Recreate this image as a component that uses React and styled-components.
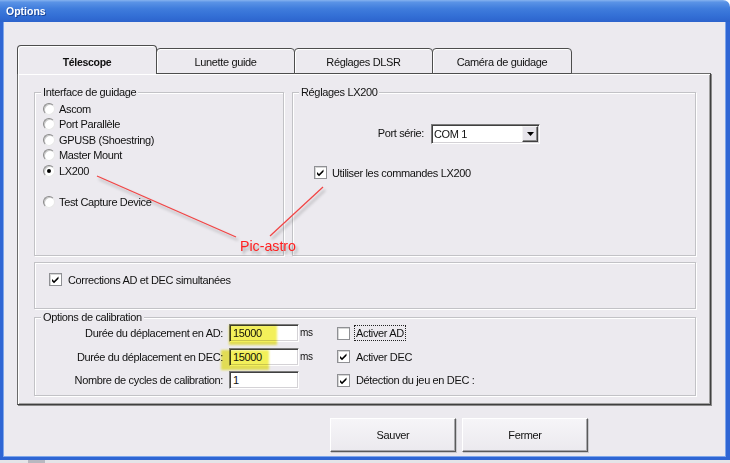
import React from 'react';
import styled, { createGlobalStyle } from 'styled-components';

const BG = '#ECEAEF';

const GlobalStyle = createGlobalStyle`
  html, body { margin: 0; padding: 0; background: #fff; }
  body {
    font-family: "Liberation Sans", Arial, sans-serif;
    font-size: 11px;
    letter-spacing: -0.35px;
    color: #111;
  }
`;

const Window = styled.div`
  position: relative;
  width: 730px;
  height: 463px;
  display: flex;
  flex-direction: column;
  overflow: hidden;
`;

const TitleBar = styled.div`
  flex: none;
  height: 22px;
  display: flex;
  align-items: center;
  padding-left: 6px;
  border-top-right-radius: 7px;
  background: linear-gradient(#86b3ef 0%, #5a93e6 10%, #3f7cdc 40%, #3470d6 70%, #2c63cc 100%);
  color: #fff;
  font-weight: bold;
  font-size: 10.5px;
  letter-spacing: 0;
  text-shadow: 1px 1px 0 #1c4596;
`;

const Client = styled.div`
  flex: none;
  box-sizing: border-box;
  height: 438px;
  display: flex;
  flex-direction: column;
  padding: 23px 15px 0 14px;
  background: ${BG};
  border-left: 3px solid #2f66d4;
  border-right: 4px solid #2f66d4;
  border-bottom: 3px solid #2f66d4;
  box-shadow: inset 1px 0 0 #7ea6ea, inset -1px 0 0 #7ea6ea, inset 0 -1px 0 #7ea6ea;
`;

const Taskbar = styled.div`
  flex: none;
  height: 3px;
  background: #e4e4e8;
  display: flex;
  padding-left: 28px;
`;

const TaskBlock = styled.div`
  width: 17px;
  background: #b8b8c0;
`;

const TabStrip = styled.div`
  position: relative;
  z-index: 1;
  display: flex;
  align-items: flex-end;
  height: 29px;
  margin-bottom: -1px;
`;

const Tab = styled.div`
  box-sizing: border-box;
  width: ${p => p.$w}px;
  height: ${p => (p.$active ? 29 : 26)}px;
  margin-left: ${p => (p.$first ? 0 : -1)}px;
  padding-top: ${p => (p.$active ? 3 : 2)}px;
  display: flex;
  align-items: center;
  justify-content: center;
  background: ${BG};
  border: 1px solid #4d4d4d;
  border-bottom: ${p => (p.$active ? 'none' : '1px solid #4d4d4d')};
  border-radius: 4px 4px 0 0;
  box-shadow: inset 1px 1px 0 #fff;
  font-weight: ${p => (p.$active ? 'bold' : 'normal')};
  font-size: ${p => (p.$active ? '10.5px' : '11px')};
  letter-spacing: ${p => (p.$active ? '-0.3px' : '-0.35px')};
  position: ${p => (p.$active ? 'relative' : 'static')};
  z-index: ${p => (p.$active ? 2 : 0)};
`;

const Panel = styled.div`
  box-sizing: border-box;
  width: 694px;
  display: flex;
  flex-direction: column;
  gap: 6px;
  padding: 18px 13px 8px 16px;
  border: 1px solid;
  border-color: #6a6a6a #404040 #404040 #6a6a6a;
  box-shadow: inset 1px 1px 0 #fff, inset -1px -1px 0 #a2a2a2, 1px 1px 0 #8a8a8a;
`;

const TopRow = styled.div`
  display: flex;
  gap: 8px;
`;

const GroupBox = styled.section`
  box-sizing: border-box;
  width: ${p => p.$w}px;
  height: ${p => p.$h}px;
  margin-top: ${p => p.$mt || 0}px;
  border: 1px solid #c2c2c6;
  box-shadow: inset 1px 1px 0 #fff, 1px 1px 0 #fff;
  display: flex;
  flex-direction: column;
  padding: ${p => p.$pad || '0'};
`;

const GroupBody = styled.div`
  display: flex;
  flex-direction: column;
  padding-left: ${p => p.$pl}px;
`;

const Legend = styled.div`
  width: fit-content;
  margin: -7px 0 0 6px;
  padding: 0 2px 0 2px;
  line-height: 12px;
  background: ${BG};
`;

const RadioList = styled.div`
  display: flex;
  flex-direction: column;
  padding: 3px 0 0 8px;
`;

const OptionRow = styled.label`
  display: flex;
  align-items: center;
  gap: 4px;
  height: 15.5px;
  margin-top: ${p => p.$gap || 0}px;
`;

const Radio = styled.span`
  position: relative;
  box-sizing: border-box;
  width: 12px;
  height: 12px;
  border-radius: 50%;
  background: #fff;
  border: 1px solid;
  border-color: #8a8a8a #e8e8e8 #e8e8e8 #8a8a8a;
  box-shadow: inset 1px 1px 0 #c8c8c8;

  &::after {
    content: '';
    display: ${p => (p.$checked ? 'block' : 'none')};
    position: absolute;
    left: 3px;
    top: 3px;
    width: 4px;
    height: 4px;
    border-radius: 50%;
    background: #000;
  }
`;

const CheckRow = styled.label`
  display: flex;
  align-items: center;
  gap: ${p => p.$gap || 5}px;
  height: 13px;
  margin-top: ${p => p.$mt || 0}px;
`;

const Box = styled.span`
  box-sizing: border-box;
  flex: none;
  width: 13px;
  height: 13px;
  display: flex;
  align-items: center;
  justify-content: center;
  background: #fff;
  border: 1px solid #8f9094;
  box-shadow: inset 1px 1px 0 #d6d6d6;
`;

const FocusText = styled.span`
  outline: 1px dotted #222;
  outline-offset: 1px;
`;

const PortRow = styled.div`
  display: flex;
  align-items: center;
  gap: 7px;
  margin: 26px 0 0 11px;
`;

const PortLabel = styled.span`
  width: 120px;
  text-align: right;
  margin-top: -3px;
`;

const Select = styled.div`
  box-sizing: border-box;
  width: 109px;
  height: 20px;
  display: flex;
  align-items: center;
  justify-content: space-between;
  padding: 1px 1px 1px 2px;
  background: #fff;
  border: 1px solid;
  border-color: #7c7c7c #fff #fff #7c7c7c;
  box-shadow: inset 1px 1px 0 #404040, inset -1px -1px 0 #d4d2d6;
`;

const DropButton = styled.span`
  box-sizing: border-box;
  width: 16px;
  height: 16px;
  display: flex;
  align-items: center;
  justify-content: center;
  background: #e6e4ea;
  border: 1px solid;
  border-color: #f4f4f4 #404040 #404040 #f4f4f4;
  box-shadow: inset -1px -1px 0 #8a8a8a;
`;

const CalRow = styled.div`
  display: flex;
  align-items: center;
  height: 18px;
  margin-top: ${p => p.$mt}px;
`;

const CalLabel = styled.span`
  width: 188px;
  text-align: right;
`;

const FieldWrap = styled.span`
  position: relative;
  margin-left: 6px;
  display: flex;
`;

const Field = styled.span`
  box-sizing: border-box;
  width: 70px;
  height: 18px;
  display: flex;
  align-items: center;
  padding-left: 3px;
  background: #fff;
  border: 1px solid;
  border-color: #7c7c7c #fff #fff #7c7c7c;
  box-shadow: inset 1px 1px 0 #404040, inset -1px -1px 0 #d4d2d6;
`;

const Highlight = styled.span`
  position: absolute;
  left: ${p => p.$x}px;
  top: ${p => p.$y}px;
  width: 48px;
  height: 20px;
  background: #f3f05a;
  mix-blend-mode: multiply;
  filter: blur(0.8px);
  pointer-events: none;
`;

const Unit = styled.span`
  width: 37px;
  margin-left: 1px;
  margin-top: -1px;
  font-size: 10px;
`;

const Buttons = styled.div`
  display: flex;
  justify-content: flex-end;
  gap: 6px;
  margin-top: 13px;
  padding-right: 123px;
`;

const Button = styled.button`
  box-sizing: border-box;
  width: 126px;
  height: 34px;
  font-family: inherit;
  font-size: 11px;
  letter-spacing: -0.35px;
  color: #111;
  background: linear-gradient(#f6f5f8, #ebe9ee);
  border: 1px solid;
  border-color: #fff #5a5a5a #5a5a5a #fff;
  box-shadow: inset -1px -1px 0 #a8a8ac, 1px 1px 0 #c8c8cc;
`;

const Annotation = styled.svg`
  position: absolute;
  left: 0;
  top: 0;
  pointer-events: none;
`;

const AnnotationText = styled.span`
  position: absolute;
  left: 240px;
  top: 238px;
  font-size: 14.2px;
  letter-spacing: 0;
  color: #ff2020;
  text-shadow: 2px 3px 3px rgba(0, 0, 0, 0.3);
  pointer-events: none;
`;

function Check() {
  return (
    <svg width="9" height="9" viewBox="0 0 9 9">
      <polygon points="1,4 3,6 7.5,1.5 7.5,3.8 3,8.3 1,6.3" fill="#000" />
    </svg>
  );
}

function CheckBox({ checked, children, gap, mt }) {
  return (
    <CheckRow $gap={gap} $mt={mt}>
      <Box>{checked && <Check />}</Box>
      {children}
    </CheckRow>
  );
}

const tabs = [
  { label: 'Télescope', w: 140, active: true },
  { label: 'Lunette guide', w: 139 },
  { label: 'Réglages DLSR', w: 139 },
  { label: 'Caméra de guidage', w: 140 },
];

const interfaces = [
  { label: 'Ascom' },
  { label: 'Port Parallèle' },
  { label: 'GPUSB (Shoestring)' },
  { label: 'Master Mount' },
  { label: 'LX200', checked: true },
  { label: 'Test Capture Device', gap: 15.5 },
];

const calibration = [
  { label: 'Durée du déplacement en AD:', value: '15000', unit: 'ms', check: 'Activer AD', checked: false, focus: true, hl: { x: 0, y: 1 }, mt: 1 },
  { label: 'Durée du déplacement en DEC:', value: '15000', unit: 'ms', check: 'Activer DEC', checked: true, hl: { x: -8, y: 2 }, mt: 5.5 },
  { label: 'Nombre de cycles de calibration:', value: '1', unit: '', check: 'Détection du jeu en DEC :', checked: true, mt: 5.5 },
];

export default function App() {
  return (
    <>
      <GlobalStyle />
      <Window>
        <TitleBar>Options</TitleBar>
        <Client>
          <TabStrip>
            {tabs.map((t, i) => (
              <Tab key={t.label} $w={t.w} $active={t.active} $first={i === 0}>
                {t.label}
              </Tab>
            ))}
          </TabStrip>
          <Panel>
            <TopRow>
              <GroupBox $w={250} $h={164}>
                <Legend>Interface de guidage</Legend>
                <RadioList>
                  {interfaces.map(o => (
                    <OptionRow key={o.label} $gap={o.gap}>
                      <Radio $checked={o.checked} />
                      {o.label}
                    </OptionRow>
                  ))}
                </RadioList>
              </GroupBox>
              <GroupBox $w={404} $h={164}>
                <Legend>Réglages LX200</Legend>
                <PortRow>
                  <PortLabel>Port série:</PortLabel>
                  <Select>
                    COM 1
                    <DropButton>
                      <svg width="7" height="4" viewBox="0 0 7 4">
                        <polygon points="0,0 7,0 3.5,4" fill="#000" />
                      </svg>
                    </DropButton>
                  </Select>
                </PortRow>
                <GroupBody $pl={21}>
                  <CheckBox checked mt={22}>Utiliser les commandes LX200</CheckBox>
                </GroupBody>
              </GroupBox>
            </TopRow>
            <GroupBox $w={662} $h={47} $pad="10px 0 0 14px">
              <CheckBox checked gap={6}>Corrections AD et DEC simultanées</CheckBox>
            </GroupBox>
            <GroupBox $w={662} $h={79} $mt={2}>
              <Legend>Options de calibration</Legend>
              {calibration.map(r => (
                <CalRow key={r.label} $mt={r.mt}>
                  <CalLabel>{r.label}</CalLabel>
                  <FieldWrap>
                    <Field>{r.value}</Field>
                    {r.hl && <Highlight $x={r.hl.x} $y={r.hl.y} />}
                  </FieldWrap>
                  <Unit>{r.unit}</Unit>
                  <CheckBox checked={r.checked} gap={6}>
                    {r.focus ? <FocusText>{r.check}</FocusText> : r.check}
                  </CheckBox>
                </CalRow>
              ))}
            </GroupBox>
          </Panel>
          <Buttons>
            <Button>Sauver</Button>
            <Button>Fermer</Button>
          </Buttons>
        </Client>
        <Taskbar>
          <TaskBlock />
        </Taskbar>
        <Annotation width="730" height="463" viewBox="0 0 730 463">
          <defs>
            <filter id="shadow" x="-20%" y="-20%" width="140%" height="140%">
              <feDropShadow dx="2" dy="3" stdDeviation="1.8" floodColor="#000" floodOpacity="0.3" />
            </filter>
          </defs>
          <g stroke="#f04545" strokeWidth="1.3" filter="url(#shadow)">
            <line x1="97" y1="176" x2="236" y2="237" />
            <line x1="270" y1="236" x2="323" y2="187" />
          </g>
        </Annotation>
        <AnnotationText>Pic-astro</AnnotationText>
      </Window>
    </>
  );
}
